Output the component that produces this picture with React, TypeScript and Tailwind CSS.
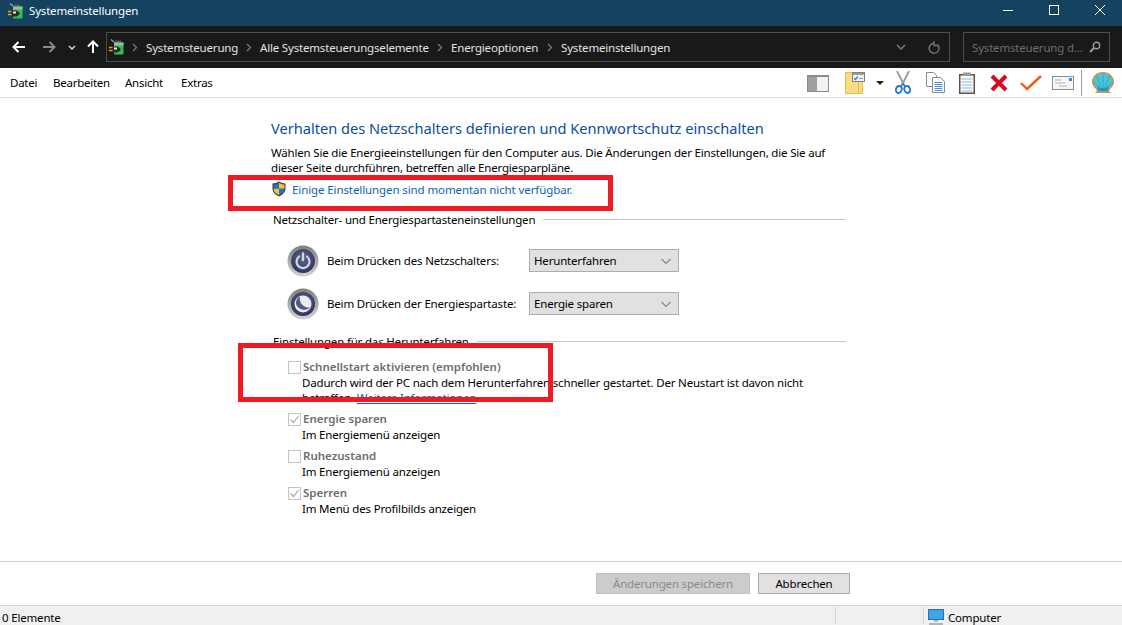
import { ReactNode } from "react";

function AppIcon() {
    return (
        <svg width="17" height="17" viewBox="0 0 17 17">
            <path d="M2 0.500l3 2.500" stroke="#a8a8a8" strokeWidth="1.200" />
            <path d="M6 1.500h6v2H6z" fill="#4d5a50" />
            <path d="M5 3.500h9.500v11a1 1 0 0 1-1 1H6a1 1 0 0 1-1-1z" fill="#2fbf55" />
            <path d="M5 3.500h9.500v3H5z" fill="#a7b5a9" />
            <path d="M3.500 7.500h5l3 2v2l-3 2h-5z" fill="#2b2b2b" />
            <path d="M5 8.500h3v2H5z" fill="#e8e8e8" />
            <path d="M0 8.500h3.500M0 11.500h3.500" stroke="#f0a020" strokeWidth="1.300" />
        </svg>
    );
}

function PowerIcon({ sleep }: { sleep?: boolean }) {
    const id = sleep ? "sleepRing" : "powerRing";
    return (
        <svg width="32" height="32" viewBox="0 0 32 32">
            <defs>
                <radialGradient id={id} cx="50%" cy="40%" r="60%">
                    <stop offset="0%" stopColor="#5f6488" />
                    <stop offset="70%" stopColor="#40456e" />
                    <stop offset="100%" stopColor="#2e3255" />
                </radialGradient>
                <linearGradient id={`${id}Edge`} x1="0" y1="0" x2="0" y2="1">
                    <stop offset="0%" stopColor="#7f7f7f" />
                    <stop offset="100%" stopColor="#d4d4d4" />
                </linearGradient>
            </defs>
            <circle cx="16" cy="16" r="15.500" fill={`url(#${id}Edge)`} />
            <circle cx="16" cy="16" r="12" fill={`url(#${id})`} />
            {sleep ? (
                <>
                    <circle cx="16" cy="16" r="8.500" fill="#e9ebf2" />
                    <path d="M13 8.200a9 9 0 0 0 10 11.200 8.500 8.500 0 0 1-14-3.400 8.500 8.500 0 0 1 4-7.800z" fill="#555a80" />
                </>
            ) : (
                <>
                    <path d="M12 11.500a6.500 6.500 0 1 0 8 0" fill="none" stroke="#d3d6e4" strokeWidth="2.200" strokeLinecap="round" />
                    <path d="M16 8.500v6.500" stroke="#d3d6e4" strokeWidth="2.400" strokeLinecap="round" />
                </>
            )}
        </svg>
    );
}

function Shield() {
    return (
        <svg width="16" height="16" viewBox="0 0 16 16">
            <path d="M8 0.500c2 1.300 4 1.900 6.500 2v5c0 3.500-2.500 6-6.500 8-4-2-6.500-4.500-6.500-8v-5c2.500-.1 4.500-.7 6.500-2z" fill="#3a3a3a" />
            <path d="M8 1.700v6H2.500v-4.200c2-.1 3.800-.7 5.500-1.800z" fill="#1f74d0" />
            <path d="M8 1.700c1.700 1.100 3.500 1.700 5.500 1.800v4.200H8z" fill="#f6c22d" />
            <path d="M2.500 7.700H8v6.500c-3.200-1.700-5.500-3.600-5.500-6.500z" fill="#f6c22d" />
            <path d="M13.500 7.700H8v6.500c3.200-1.700 5.500-3.600 5.500-6.500z" fill="#1f74d0" />
        </svg>
    );
}

function Chevron() {
    return (
        <svg width="12" height="12" viewBox="0 0 12 12">
            <path d="M1.500 4l4.500 4.500L10.500 4" fill="none" stroke="#444" strokeWidth="1" />
        </svg>
    );
}

function Crumb({ label, width }: { label: string; width: string }) {
    return (
        <div className={`flex items-center ${width}`}>
            <svg width="6" height="9" viewBox="0 0 6 9" className="mr-[8px] shrink-0">
                <path d="M1 1l3.500 3.500L1 8" fill="none" stroke="#7a7a7a" strokeWidth="1.300" />
            </svg>
            <span>{label}</span>
        </div>
    );
}

function PowerRow({ label, value, sleep }: { label: string; value: string; sleep?: boolean }) {
    return (
        <div className="flex h-[43px] items-center">
            <div className="ml-[16px] w-[40px] shrink-0">
                <PowerIcon sleep={sleep} />
            </div>
            <div className="w-[202px] text-black">{label}</div>
            <div className="flex h-[23px] w-[150px] items-center justify-between border border-[#adadad] bg-[#e1e1e1] pl-[4px] pr-[6px]">
                <span>{value}</span>
                <Chevron />
            </div>
        </div>
    );
}

function Option({ title, checked, children }: { title: string; checked?: boolean; children: ReactNode }) {
    return (
        <div className="flex">
            <div className="ml-[17px] mt-[2px] flex h-[13px] w-[13px] shrink-0 items-center justify-center border border-[#c4c4c4]">
                {checked && (
                    <svg width="11" height="11" viewBox="0 0 11 11">
                        <path d="M1.500 5.500l3 3 5-6.500" fill="none" stroke="#a8a8a8" strokeWidth="1.200" />
                    </svg>
                )}
            </div>
            <div className="ml-[1px]">
                <div className="ml-[1px] h-[16px] font-semibold tracking-normal text-[#6d6d6d]">{title}</div>
                <div className="text-black">{children}</div>
            </div>
        </div>
    );
}

function SectionTitle({ children }: { children: ReactNode }) {
    return (
        <div className="flex items-center">
            <span className="ml-[2px] mr-[8px] text-black">{children}</span>
            <div className="h-px flex-1 bg-[#c8c8c8]" />
        </div>
    );
}

function Toolbar() {
    return (
        <div className="ml-auto flex items-center">
            {/* layout */}
            <svg width="22" height="17" viewBox="0 0 22 17" className="mr-[16px] mt-[2px]">
                <rect x="0.500" y="0.500" width="21" height="16" fill="#f2f2f2" stroke="#8a8a8a" />
                <rect x="1" y="1" width="9" height="15" fill="#a0a0a0" />
                <rect x="0" y="0" width="22" height="2" fill="#8a8a8a" />
            </svg>
            {/* folder */}
            <svg width="20" height="22" viewBox="0 0 20 22" className="mr-[11px]">
                <path d="M0.500 0.500h7v2h7v4l3 2v13H0.500z" fill="#fbdc85" stroke="#eab84a" />
                <path d="M13.500 9v12" stroke="#eab84a" />
                <rect x="7.500" y="0.500" width="12" height="9" fill="#f5f5f5" stroke="#7f7f7f" />
                <path d="M8 1h11v2H8z" fill="#9a9a9a" />
                <path d="M9 6l1.500 1.500L13 4.500" fill="none" stroke="#2a7fd5" strokeWidth="1.200" />
                <path d="M14 6.500h4" stroke="#999" />
            </svg>
            <svg width="8" height="4" viewBox="0 0 8 4" className="mr-[11px]">
                <path d="M0 0h8L4 4z" fill="#222" />
            </svg>
            {/* scissors */}
            <svg width="16" height="23" viewBox="0 0 16 23" className="mr-[15px]">
                <path d="M2 0l7 14M14 0L7 14" stroke="#a0a0a0" strokeWidth="2" />
                <ellipse cx="3.800" cy="18.500" rx="2.800" ry="3.500" fill="none" stroke="#1878d0" strokeWidth="1.800" transform="rotate(20 3.800 18.500)" />
                <ellipse cx="12.200" cy="18.500" rx="2.800" ry="3.500" fill="none" stroke="#1878d0" strokeWidth="1.800" transform="rotate(-20 12.200 18.500)" />
                <path d="M6 15l2-2 2 2" fill="none" stroke="#1878d0" strokeWidth="1.500" />
            </svg>
            {/* copy */}
            <svg width="19" height="21" viewBox="0 0 19 21" className="mr-[14px]">
                <path d="M0.500 0.500h7l3 3v11H0.500z" fill="#fff" stroke="#8a8a8a" />
                <path d="M6.500 5.500h8l4 4v11h-12z" fill="#fff" stroke="#8a8a8a" />
                <path d="M8.500 10.500h8M8.500 12.500h8M8.500 14.500h8M8.500 16.500h8M8.500 18.500h8" stroke="#4a90dc" />
            </svg>
            {/* clipboard */}
            <svg width="16" height="22" viewBox="0 0 16 22" className="mr-[15px]">
                <rect x="0.750" y="2.750" width="14.500" height="18.500" fill="#fff" stroke="#6b4a38" strokeWidth="1.500" />
                <rect x="4" y="0.500" width="8" height="3.500" fill="#9a9a9a" />
                <path d="M2.500 7h11M2.500 10h11M2.500 13h11M2.500 16h11M2.500 19h11" stroke="#a8d0f0" strokeWidth="1.500" />
            </svg>
            {/* delete */}
            <svg width="18" height="18" viewBox="0 0 18 18" className="mr-[12px]">
                <path d="M2 2l14 14M16 2L2 16" stroke="#d8091b" strokeWidth="4" />
            </svg>
            {/* check */}
            <svg width="22" height="16" viewBox="0 0 22 16" className="mr-[10px]">
                <path d="M1 8l6 6L21 1" fill="none" stroke="#ee5c17" strokeWidth="2.400" />
            </svg>
            {/* envelope */}
            <svg width="22" height="14" viewBox="0 0 22 14" className="mr-[7px]">
                <rect x="0.500" y="0.500" width="21" height="13" fill="#f7f7f7" stroke="#8f8f8f" />
                <rect x="17" y="2" width="3" height="3" fill="#2f8fe0" />
                <path d="M3 4h6M3 7h10M7 10h8" stroke="#b0b0b0" />
            </svg>
            <div className="mr-[9px] h-[26px] w-px bg-[#9a9a9a]" />
            {/* shell */}
            <svg width="24" height="24" viewBox="0 0 24 24" className="mr-[7px]">
                <path d="M12 1c6 0 11 4 11 10 0 3-2 5-4 7l-1 2 2 2H4l2-2-1-2c-2-2-4-4-4-7C1 5 6 1 12 1z" fill="#d98a45" />
                <path d="M12 2.500c5 0 9.500 3.500 9.500 8.500 0 3-2 4.500-3.500 6.500l-1 3H7l-1-3C4.500 15.500 2.500 14 2.500 11c0-5 4.500-8.500 9.500-8.500z" fill="#49c6d8" />
                <path d="M12 20V3M12 20L5.500 5M12 20l6.500-15M12 20L2.500 10.500M12 20l9.500-9.500" stroke="#2f9fb8" strokeWidth="0.800" />
                <path d="M6 15c3 3 9 3 12 0l-1 5H7z" fill="#2c7fa6" opacity="0.700" />
            </svg>
        </div>
    );
}

export default function App() {
    return (
        <div
            className="relative flex h-[625px] w-[1122px] flex-col overflow-hidden whitespace-nowrap bg-white text-[11.500px] leading-[15px] tracking-[-0.18px] text-black"
            style={{ fontFamily: '"Noto Sans", sans-serif' }}
        >
            {/* Title bar */}
            <div className="flex h-[26px] shrink-0 items-center bg-[#15425f] pb-[6px] text-white">
                <div className="ml-[8px] mr-[4px] mt-[2px]"><AppIcon /></div>
                <span>Systemeinstellungen</span>
                <div className="ml-auto mr-[-1px] flex">
                    <div className="flex h-[10px] w-[46px] items-center justify-center">
                        <div className="h-px w-[10px] bg-white" />
                    </div>
                    <div className="flex w-[46px] justify-center">
                        <div className="h-[10px] w-[10px] border border-white" />
                    </div>
                    <div className="flex w-[46px] justify-center">
                        <svg width="10" height="10" viewBox="0 0 10 10">
                            <path d="M0 0l10 10M10 0L0 10" stroke="#fff" strokeWidth="1" />
                        </svg>
                    </div>
                </div>
            </div>

            {/* Navigation bar */}
            <div className="flex h-[42px] shrink-0 items-center bg-[#191919] text-[#e4e4e4]">
                <svg width="14" height="12" viewBox="0 0 14 12" className="ml-[12px]">
                    <path d="M13 6H2M6.500 1L1.500 6l5 5" fill="none" stroke="#fff" strokeWidth="2" />
                </svg>
                <svg width="14" height="12" viewBox="0 0 14 12" className="ml-[16px]">
                    <path d="M1 6h11M7.500 1l5 5-5 5" fill="none" stroke="#8a8a8a" strokeWidth="2" />
                </svg>
                <svg width="8" height="5" viewBox="0 0 8 5" className="ml-[12px]">
                    <path d="M1 1l3 3 3-3" fill="none" stroke="#d5d5d5" strokeWidth="1.500" />
                </svg>
                <svg width="12" height="14" viewBox="0 0 12 14" className="ml-[11px]">
                    <path d="M6 13V2M1 6.500l5-5 5 5" fill="none" stroke="#fff" strokeWidth="2" />
                </svg>
                <div className="ml-[7px] flex h-[30px] w-[844px] items-center border border-[#4d4d4d] pl-[2px]">
                    <AppIcon />
                    <div className="ml-[6px] flex flex-1 items-center">
                        <Crumb label="Systemsteuerung" width="w-[114px]" />
                        <Crumb label="Alle Systemsteuerungselemente" width="w-[191px]" />
                        <Crumb label="Energieoptionen" width="w-[110px]" />
                        <Crumb label="Systemeinstellungen" width="w-[130px]" />
                    </div>
                    <svg width="10" height="6" viewBox="0 0 10 6" className="mr-[22px]">
                        <path d="M1 1l4 4 4-4" fill="none" stroke="#777" strokeWidth="1.500" />
                    </svg>
                    <svg width="12" height="13" viewBox="0 0 12 13" className="mr-[9px]">
                        <path d="M9.500 3.500a5 5 0 1 1-3-1.300M6 0v4.500h4" fill="none" stroke="#777" strokeWidth="1.400" />
                    </svg>
                </div>
                <div className="ml-[13px] flex h-[30px] w-[147px] items-center justify-between border border-[#4d4d4d] pl-[8px] pr-[8px] text-[#6e6e6e]">
                    <span>Systemsteuerung d...</span>
                    <svg width="12" height="12" viewBox="0 0 12 12">
                        <circle cx="7.500" cy="4.500" r="3.200" fill="none" stroke="#9a9a9a" strokeWidth="1.400" />
                        <path d="M5 7l-4 4" stroke="#9a9a9a" strokeWidth="2" />
                    </svg>
                </div>
            </div>

            {/* Menu bar */}
            <div className="flex h-[30px] shrink-0 items-center border-b border-[#dcdcdc] pl-[10px]">
                <div className="flex tracking-[-0.25px]">
                    <span className="w-[43px]">Datei</span>
                    <span className="w-[72px]">Bearbeiten</span>
                    <span className="w-[56px]">Ansicht</span>
                    <span>Extras</span>
                </div>
                <Toolbar />
            </div>

            {/* Content */}
            <div className="flex-1 pl-[271px] pr-[276px] pt-[20px]">
                <h1 className="h-[27px] text-[14.600px] leading-[20px] tracking-normal text-[#0b4da2]">
                    Verhalten des Netzschalters definieren und Kennwortschutz einschalten
                </h1>
                <p className="w-[575px]">
                    Wählen Sie die Energieeinstellungen für den Computer aus. Die Änderungen der Einstellungen, die Sie auf
                    <br />
                    dieser Seite durchführen, betreffen alle Energiesparpläne.
                </p>
                <div className="mt-[4px] flex h-[20px] items-center gap-[5px] tracking-[-0.1px] text-[#0a5fc4]">
                    <Shield />
                    <span>Einige Einstellungen sind momentan nicht verfügbar.</span>
                </div>
                <div className="mt-[13px]">
                    <SectionTitle>Netzschalter- und Energiespartasteneinstellungen</SectionTitle>
                </div>
                <div className="mt-[12px]">
                    <PowerRow label="Beim Drücken des Netzschalters:" value="Herunterfahren" />
                    <PowerRow label="Beim Drücken der Energiespartaste:" value="Energie sparen" sleep />
                </div>
                <div className="mt-[9px]">
                    <SectionTitle>Einstellungen für das Herunterfahren</SectionTitle>
                </div>
                <div className="mt-[10px] flex flex-col gap-[6px]">
                    <Option title="Schnellstart aktivieren (empfohlen)">
                        Dadurch wird der PC nach dem Herunterfahren schneller gestartet. Der Neustart ist davon nicht
                        <br />
                        betroffen. <span className="text-[#0a5fc4] underline">Weitere Informationen</span>
                    </Option>
                    <Option title="Energie sparen" checked>Im Energiemenü anzeigen</Option>
                    <Option title="Ruhezustand">Im Energiemenü anzeigen</Option>
                    <Option title="Sperren" checked>Im Menü des Profilbilds anzeigen</Option>
                </div>
            </div>

            {/* Buttons */}
            <div className="flex h-[44px] shrink-0 items-center justify-end gap-[8px] border-t border-[#d0d0d0] pr-[272px]">
                <div className="flex h-[21px] w-[154px] items-center justify-center border border-[#bfbfbf] bg-[#cccccc] text-[#8a8a8a]">
                    Änderungen speichern
                </div>
                <div className="flex h-[21px] w-[92px] items-center justify-center border border-[#adadad] bg-[#e1e1e1]">
                    Abbrechen
                </div>
            </div>

            {/* Status bar */}
            <div className="flex h-[20px] shrink-0 items-start border-t border-[#d7d7d7] bg-[#f0f0f0] pt-[4px]">
                <span className="ml-[2px] w-[833px]">0 Elemente</span>
                <div className="mt-[-3px] h-[17px] w-px bg-[#d7d7d7]" />
                <div className="ml-[87px] mt-[-3px] h-[17px] w-px bg-[#d7d7d7]" />
                <svg width="16" height="17" viewBox="0 0 16 17" className="ml-[4px] mt-[-1px] shrink-0">
                    <rect x="0.500" y="0.500" width="15" height="10" fill="#3fa5e8" stroke="#2b6ea8" />
                    <rect x="6" y="11" width="4" height="2" fill="#b5b5b5" />
                    <rect x="1" y="14" width="14" height="3" fill="#b5b5b5" />
                </svg>
                <span className="ml-[4px]">Computer</span>
            </div>

            {/* Red markers */}
            <div className="absolute left-[228px] top-[175px] h-[36px] w-[385px] border-[5px] border-[#ed1c24]" />
            <div className="absolute left-[238px] top-[343px] h-[59px] w-[315px] border-[5px] border-[#ed1c24]" />
        </div>
    );
}
